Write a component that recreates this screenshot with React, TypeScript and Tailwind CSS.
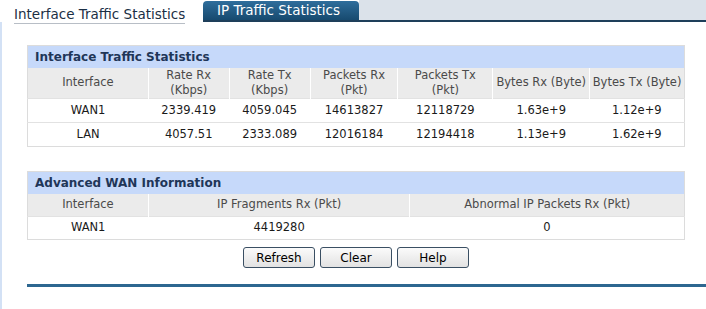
import React from 'react';

const font = { fontFamily: '"DejaVu Sans", Verdana, sans-serif' };

const traffic = [
  { name: 'WAN1', rateRx: '2339.419', rateTx: '4059.045', pktRx: '14613827', pktTx: '12118729', byteRx: '1.63e+9', byteTx: '1.12e+9' },
  { name: 'LAN', rateRx: '4057.51', rateTx: '2333.089', pktRx: '12016184', pktTx: '12194418', byteRx: '1.13e+9', byteTx: '1.62e+9' },
];

function Th({ children, w }: { children: React.ReactNode; w: string }) {
  return (
    <th className={`${w} font-normal text-[#4a4a4a] border-l border-white first:border-l-0 leading-[15px] align-middle`}>
      {children}
    </th>
  );
}

function Button({ label }: { label: string }) {
  return (
    <button className="w-[72px] h-[21px] rounded-[3px] border border-[#3a4f63] bg-gradient-to-b from-[#fbfbfb] to-[#e2e2e2] text-[12px] text-black leading-none">
      {label}
    </button>
  );
}

export default function App() {
  return (
    <div className="w-[706px] h-[309px] bg-white overflow-hidden" style={font}>
      {/* tab strip */}
      <div className="flex h-[22px]">
        <div className="w-[203px] shrink-0 bg-white pl-[14px] pt-[2px]">
          <span className="inline-block whitespace-nowrap text-[13.5px] leading-[18px] text-[#1b2f45] border-b border-[#b8bec6]">
            Interface Traffic Statistics
          </span>
        </div>
        <div className="w-[156px] shrink-0 whitespace-nowrap mt-[1px] rounded-t-[4px] bg-gradient-to-b from-[#2f6e9c] to-[#174a6f] text-white text-[13.5px] leading-[19px] pl-[14px] border-b-2 border-[#1e3f5a]">
          IP Traffic Statistics
        </div>
        <div className="flex-1 bg-[#dbe2ea] border-b-2 border-[#1e3f5a]" />
      </div>

      <div className="h-[287px] border-l-2 border-[#d3e1f5] pl-[25px] pr-[21px] pt-[23px] text-[11.5px]">
        {/* interface traffic table */}
        <table className="w-[658px] border-collapse border border-[#dcdcdc] text-center">
          <thead>
            <tr className="h-[22px] bg-[#c6d9fa]">
              <th colSpan={7} className="text-left pl-[7px] font-bold text-[12px] text-[#1f3658]">
                Interface Traffic Statistics
              </th>
            </tr>
            <tr className="h-[31px] bg-[#ebebeb]">
              <Th w="w-[121px]">Interface</Th>
              <Th w="w-[81px]">Rate Rx<br />(Kbps)</Th>
              <Th w="w-[81px]">Rate Tx<br />(Kbps)</Th>
              <Th w="w-[88px]">Packets Rx<br />(Pkt)</Th>
              <Th w="w-[95px]">Packets Tx<br />(Pkt)</Th>
              <Th w="w-[97px]">Bytes Rx (Byte)</Th>
              <Th w="w-[95px]">Bytes Tx (Byte)</Th>
            </tr>
          </thead>
          <tbody className="text-[#1a1a1a]">
            {traffic.map((r) => (
              <tr key={r.name} className="h-[24px] border-t border-[#e2e2e2]">
                <td>{r.name}</td>
                <td>{r.rateRx}</td>
                <td>{r.rateTx}</td>
                <td>{r.pktRx}</td>
                <td>{r.pktTx}</td>
                <td>{r.byteRx}</td>
                <td>{r.byteTx}</td>
              </tr>
            ))}
          </tbody>
        </table>

        {/* advanced wan table */}
        <table className="w-[658px] mt-[24px] border-collapse border border-[#dcdcdc] text-center">
          <thead>
            <tr className="h-[22px] bg-[#c6d9fa]">
              <th colSpan={3} className="text-left pl-[7px] font-bold text-[12px] text-[#1f3658]">
                Advanced WAN Information
              </th>
            </tr>
            <tr className="h-[23px] bg-[#ebebeb]">
              <Th w="w-[121px]">Interface</Th>
              <Th w="w-[262px]">IP Fragments Rx (Pkt)</Th>
              <Th w="w-[275px]">Abnormal IP Packets Rx (Pkt)</Th>
            </tr>
          </thead>
          <tbody className="text-[#1a1a1a]">
            <tr className="h-[23px] border-t border-[#e2e2e2]">
              <td>WAN1</td>
              <td>4419280</td>
              <td>0</td>
            </tr>
          </tbody>
        </table>

        <div className="w-[658px] flex justify-center gap-[5px] mt-[7px]">
          <Button label="Refresh" />
          <Button label="Clear" />
          <Button label="Help" />
        </div>

        <div className="w-[679px] h-[3px] bg-[#2d6790] mt-[16px]" />
      </div>
    </div>
  );
}
